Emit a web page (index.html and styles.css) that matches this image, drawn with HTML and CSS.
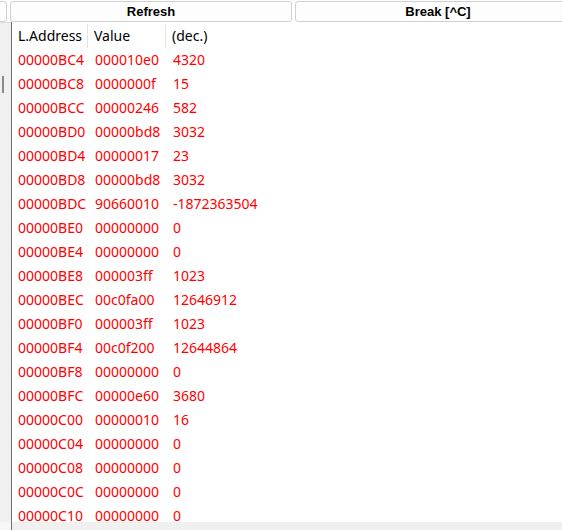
FILE: index.html
```html
<!DOCTYPE html>
<html>
<head>
<meta charset="utf-8">
<link rel="stylesheet" href="styles.css">
</head>
<body>
<div class="toolbar">
  <div class="btn btn-stub"></div>
  <div class="btn btn-refresh">Refresh</div>
  <div class="btn btn-break">Break [^C]</div>
</div>
<div class="main">
  <div class="side"><div class="side-top"><div class="thumb"></div></div><div class="side-bottom"></div></div>
  <div class="content">
    <div class="list">
      <div class="row head"><div class="c c1">L.Address</div><div class="c c2">Value</div><div class="c c3">(dec.)</div></div>
      <div class="row"><div class="c c1">00000BC4</div><div class="c c2">000010e0</div><div class="c c3">4320</div></div>
      <div class="row"><div class="c c1">00000BC8</div><div class="c c2">0000000f</div><div class="c c3">15</div></div>
      <div class="row"><div class="c c1">00000BCC</div><div class="c c2">00000246</div><div class="c c3">582</div></div>
      <div class="row"><div class="c c1">00000BD0</div><div class="c c2">00000bd8</div><div class="c c3">3032</div></div>
      <div class="row"><div class="c c1">00000BD4</div><div class="c c2">00000017</div><div class="c c3">23</div></div>
      <div class="row"><div class="c c1">00000BD8</div><div class="c c2">00000bd8</div><div class="c c3">3032</div></div>
      <div class="row"><div class="c c1">00000BDC</div><div class="c c2">90660010</div><div class="c c3">-1872363504</div></div>
      <div class="row"><div class="c c1">00000BE0</div><div class="c c2">00000000</div><div class="c c3">0</div></div>
      <div class="row"><div class="c c1">00000BE4</div><div class="c c2">00000000</div><div class="c c3">0</div></div>
      <div class="row"><div class="c c1">00000BE8</div><div class="c c2">000003ff</div><div class="c c3">1023</div></div>
      <div class="row"><div class="c c1">00000BEC</div><div class="c c2">00c0fa00</div><div class="c c3">12646912</div></div>
      <div class="row"><div class="c c1">00000BF0</div><div class="c c2">000003ff</div><div class="c c3">1023</div></div>
      <div class="row"><div class="c c1">00000BF4</div><div class="c c2">00c0f200</div><div class="c c3">12644864</div></div>
      <div class="row"><div class="c c1">00000BF8</div><div class="c c2">00000000</div><div class="c c3">0</div></div>
      <div class="row"><div class="c c1">00000BFC</div><div class="c c2">00000e60</div><div class="c c3">3680</div></div>
      <div class="row"><div class="c c1">00000C00</div><div class="c c2">00000010</div><div class="c c3">16</div></div>
      <div class="row"><div class="c c1">00000C04</div><div class="c c2">00000000</div><div class="c c3">0</div></div>
      <div class="row"><div class="c c1">00000C08</div><div class="c c2">00000000</div><div class="c c3">0</div></div>
      <div class="row"><div class="c c1">00000C0C</div><div class="c c2">00000000</div><div class="c c3">0</div></div>
      <div class="row last"><div class="c c1">00000C10</div><div class="c c2">00000000</div><div class="c c3">0</div></div>
    </div>
    <div class="bottom"></div>
  </div>
</div>
</body>
</html>
```

FILE: styles.css
```css
html, body {
  margin: 0;
  padding: 0;
  background: #ffffff;
  overflow: hidden;
  width: 562px;
  height: 530px;
}
.toolbar {
  display: flex;
  gap: 3px;
  height: 22px;
  margin-left: -5px;
  box-sizing: border-box;
  padding-top: 1px;
  width: 567px;
  overflow: hidden;
}
.btn {
  box-sizing: border-box;
  height: 21px;
  border: 1px solid #d0d0d0;
  border-radius: 3px;
  background: #fdfdfd;
  font-family: "Liberation Sans", Arial, sans-serif;
  font-weight: bold;
  font-size: 13px;
  line-height: 19px;
  text-align: center;
  color: #000;
  flex: none;
}
.btn-stub { width: 12px; }
.btn-refresh { width: 282px; }
.btn-break { width: 286px; }
.main {
  display: flex;
  height: 508px;
}
.side {
  width: 11px;
  border-right: 1px solid #6e6e6e;
  display: flex;
  flex-direction: column;
}
.side-top {
  height: 500px;
  background: #f0f0f0;
  border-top: 1px solid #dcdcdc;
  box-sizing: border-box;
  padding-top: 53px;
}
.side-bottom {
  flex: 1;
  background: #f7f7f7;
}
.thumb {
  width: 2px;
  height: 17px;
  margin-left: 2px;
  background: #8a8a8a;
}
.content {
  flex: 1;
  display: flex;
  flex-direction: column;
}
.list {
  height: 500px;
  background: #fff;
  padding-top: 2px;
  box-sizing: border-box;
}
.bottom {
  flex: 1;
  background: #f0f0f0;
}
.row {
  display: grid;
  grid-template-columns: 76px 78px 1fr;
  height: 24px;
  font-family: "Noto Sans", "Open Sans", sans-serif;
  font-size: 14px;
  line-height: 24px;
  color: #ff0000;
}
.row.last {
  height: 18px;
}
.row.head {
  color: #000;
}
.c1 { padding-left: 6px; }
.c2 { padding-left: 7px; }
.c3 { padding-left: 7px; }
.head .c1, .head .c2 {
  border-right: 1px solid #e5e5e5;
}
.head .c2 { padding-left: 6px; }
.head .c3 { padding-left: 6px; }
```
